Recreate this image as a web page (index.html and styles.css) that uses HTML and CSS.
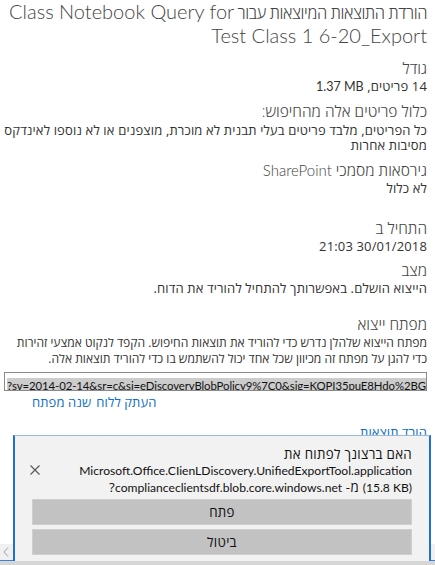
FILE: index.html
```html
<!DOCTYPE html>
<html lang="he" dir="rtl">
<head>
<meta charset="utf-8">
<title>הורדת התוצאות המיוצאות</title>
<link rel="stylesheet" href="styles.css">
</head>
<body>
<main class="page">
  <h1 class="title">הורדת התוצאות המיוצאות עבור <span lang="en">Class Notebook Query for Test Class 1 6-20_Export</span></h1>

  <section class="field f-size">
    <h2 class="label">גודל</h2>
    <p class="value">14 פריטים, <bdi lang="en">1.37 MB</bdi></p>
  </section>

  <section class="field f-include">
    <h2 class="label">כלול פריטים אלה מהחיפוש:</h2>
    <p class="value multi">כל הפריטים, מלבד פריטים בעלי תבנית לא מוכרת, מוצפנים או לא נוספו לאינדקס מסיבות אחרות</p>
  </section>

  <section class="field f-versions">
    <h2 class="label">גירסאות מסמכי <span lang="en">SharePoint</span></h2>
    <p class="value">לא כלול</p>
  </section>

  <section class="field f-started">
    <h2 class="label">התחיל ב</h2>
    <p class="value">30/01/2018 21:03</p>
  </section>

  <section class="field f-status">
    <h2 class="label">מצב</h2>
    <p class="value">הייצוא הושלם. באפשרותך להתחיל להוריד את הדוח.</p>
  </section>

  <section class="field f-key">
    <h2 class="label">מפתח ייצוא</h2>
    <p class="value multi compact">מפתח הייצוא שלהלן נדרש כדי להוריד את תוצאות החיפוש. הקפד לנקוט אמצעי זהירות כדי להגן על מפתח זה מכיוון שכל אחד יכול להשתמש בו כדי להוריד תוצאות אלה.</p>
    <div class="keybox" dir="ltr" lang="en"><span class="keytext">?sv=2014-02-14&amp;sr=c&amp;si=eDiscoveryBlobPolicy9%7C0&amp;sig=KQPI35puE8Hdo%2BG3dW4Yx</span></div>
    <div class="keylinks">
      <a class="link" href="#">העתק ללוח</a>
      <a class="link" href="#">שנה מפתח</a>
    </div>
  </section>

  <a class="link download" href="#">הורד תוצאות</a>
</main>

<div class="hscroll">
  <span class="hscroll-arrow">
    <svg width="6" height="10" viewBox="0 0 6 10"><path d="M5 0.5 L1 5 L5 9.5" fill="none" stroke="#a0a0a0" stroke-width="1"/></svg>
  </span>
</div>
<div class="framebar"></div>

<div class="notify" role="dialog">
  <div class="notify-msg">
    <p class="notify-text">האם ברצונך לפתוח את<br><span lang="en">Microsoft.Office.CIienLDiscovery.UnifiedExportTool.application</span><br><bdi lang="en">(15.8 KB)</bdi> מ- <span lang="en">complianceclientsdf.blob.core.windows.net</span>?</p>
    <button class="notify-close" aria-label="סגור">
      <svg width="10" height="10" viewBox="0 0 10 10"><path d="M0.5 0.5 L9.5 9.5 M9.5 0.5 L0.5 9.5" stroke="#555" stroke-width="1.1" fill="none"/></svg>
    </button>
  </div>
  <div class="notify-actions">
    <button class="notify-btn">פתח</button>
    <button class="notify-btn">ביטול</button>
  </div>
</div>
</body>
</html>
```

FILE: styles.css
```css
html, body {
  margin: 0;
  padding: 0;
  background: #ffffff;
}

body {
  width: 435px;
  height: 565px;
  overflow: hidden;
  font-family: "Open Sans", "DejaVu Sans", sans-serif;
  color: #333333;
  direction: rtl;
}

/* Latin runs get a narrower face than the Hebrew text */
:lang(en) {
  font-family: "Lato", "Liberation Sans", sans-serif;
  letter-spacing: 0;
}

.page {
  padding: 0 8px 0 2px;
}

.title {
  margin: 0 0 0 6px;
  font-size: 16.5px;
  line-height: 22px;
  font-weight: 300;
  letter-spacing: -0.4px;
  color: #444444;
}

.title :lang(en) {
  font-size: 20px;
  font-weight: 300;
}

.label {
  margin: 0;
  font-size: 15.5px;
  line-height: 19px;
  font-weight: 300;
  color: #444444;
}

.label :lang(en) {
  font-size: 15px;
}

.value {
  margin: 0;
  font-size: 13px;
  line-height: 16px;
  letter-spacing: 0.15px;
  color: #333333;
}

.value :lang(en) {
  font-size: 12.5px;
}

.value.multi {
  line-height: 15px;
  margin-top: 2px;
}

.value.compact {
  font-size: 12.1px;
  letter-spacing: 0;
  line-height: 16px;
  margin-top: 1px;
}

.f-size { margin-top: 11px; }
.f-include { margin-top: 7px; }
.f-versions { margin-top: 8px; }
.f-started { margin-top: 23px; }
.f-status { margin-top: 7px; }
.f-key { margin-top: 19px; }

.keybox {
  margin: 5px 0 0 2px;
  height: 19px;
  border: 1px solid #8a8a8a;
  box-sizing: border-box;
  padding: 1px 2px;
  overflow: hidden;
  white-space: nowrap;
  background: #ffffff;
}

.keytext {
  display: inline-block;
  background: #cccccc;
  color: #111111;
  font-size: 11.4px;
  letter-spacing: -0.1px;
  line-height: 15px;
}

.keylinks {
  display: flex;
  justify-content: flex-end;
  gap: 5px;
  margin-top: 3px;
  padding-left: 30px;
}

.link {
  color: #0f6fc6;
  text-decoration: none;
  font-size: 13px;
  letter-spacing: 0.1px;
  line-height: 16px;
}

.download {
  display: inline-block;
  margin-top: 14px;
  text-decoration: underline;
}

/* window chrome along the bottom edge */
.hscroll {
  position: fixed;
  left: 0;
  right: 0;
  bottom: 5px;
  height: 16px;
  background: #f0f0f0;
  display: flex;
  align-items: center;
  direction: ltr;
}

.hscroll-arrow {
  display: flex;
  margin-left: 3px;
}

.framebar {
  position: fixed;
  left: 0;
  right: 0;
  bottom: 0;
  height: 4px;
  border-top: 1px solid #3c7fd6;
  background: #d6d6d6;
}

/* open-file notification overlay */
.notify {
  position: fixed;
  left: 13px;
  top: 435px;
  width: 418px;
  height: 126px;
  box-sizing: border-box;
  border-top: 1px solid #9db9dd;
  border-left: 2px solid #1f6fd8;
  border-right: 2px solid #1f6fd8;
  background: #f2f2f2;
  padding: 10px 17px 0 17px;
  display: flex;
  flex-direction: column;
  gap: 3px;
}

.notify-msg {
  display: flex;
  align-items: center;
}

.notify-text {
  flex: 1;
  margin: 0;
  font-size: 13.3px;
  letter-spacing: 0.3px;
  line-height: 16px;
  color: #111111;
}

.notify-text :lang(en) {
  font-size: 12.1px;
}

.notify-close {
  border: 0;
  background: transparent;
  padding: 0;
  width: 10px;
  height: 10px;
  display: flex;
  margin-left: -2px;
  margin-top: -2px;
}

.notify-actions {
  display: flex;
  flex-direction: column;
  gap: 4px;
}

.notify-btn {
  height: 26px;
  border: 1px solid #cfcfcf;
  background: #c2c2c2;
  font-family: inherit;
  font-size: 13.3px;
  letter-spacing: 0.3px;
  color: #111111;
  padding: 0;
}
```
